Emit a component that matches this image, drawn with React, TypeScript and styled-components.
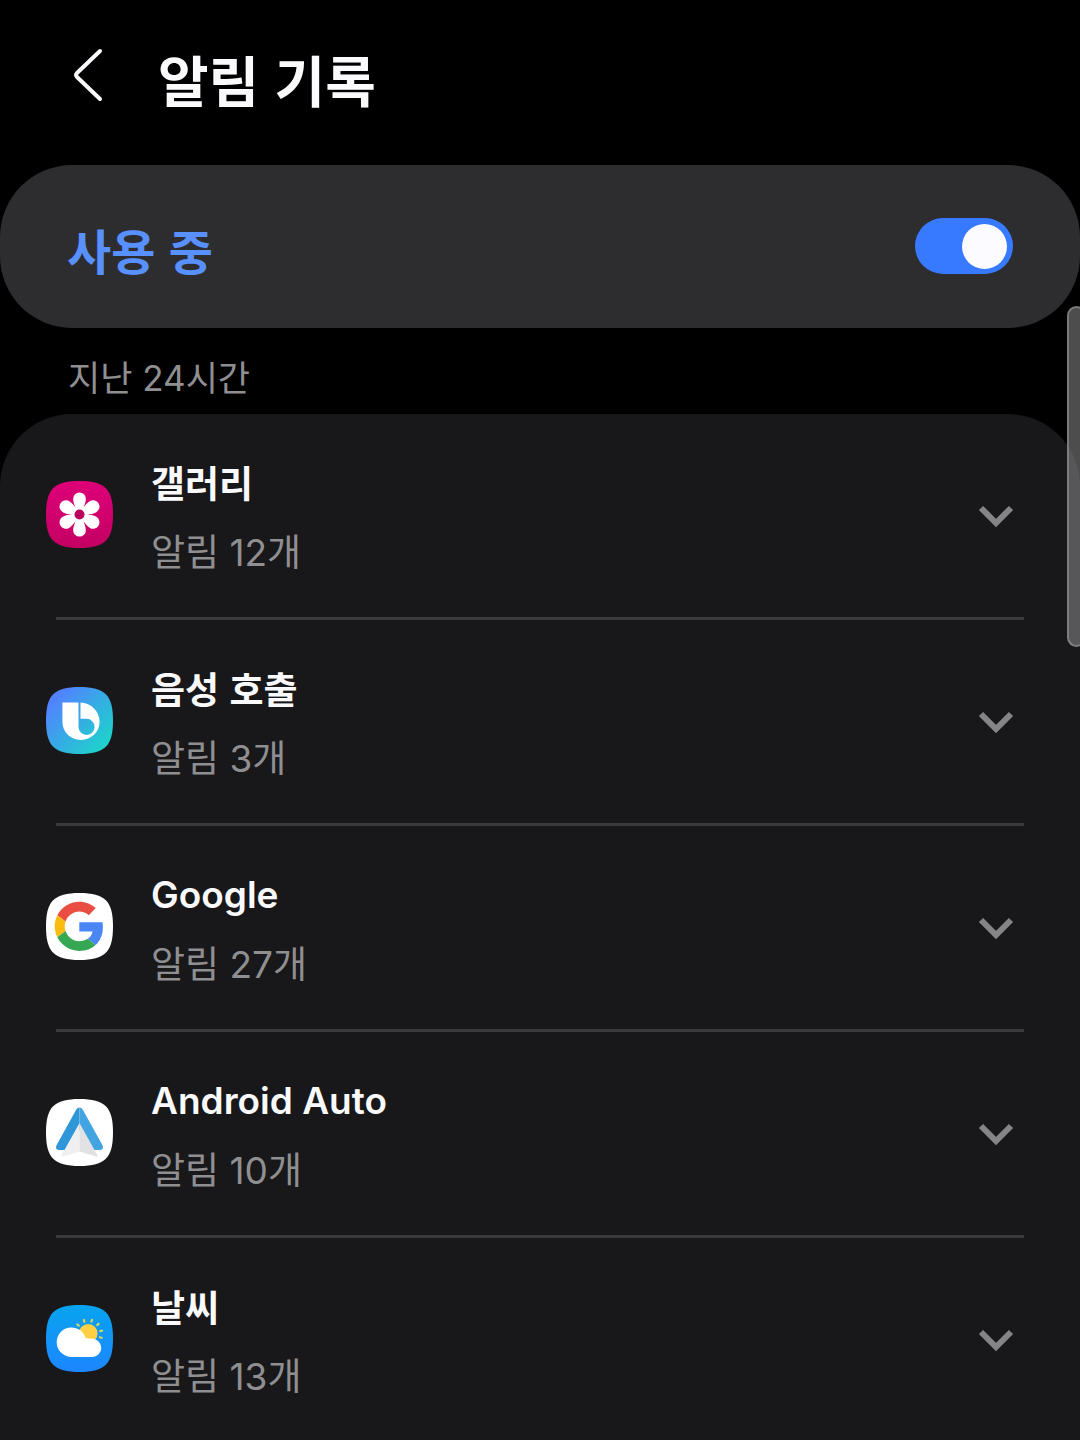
import React, { useState } from "react";
import styled, { createGlobalStyle } from "styled-components";

const hangulFirst = `"Noto Sans CJK KR", "Noto Sans", sans-serif`;
const latinFirst = `Inter, "Noto Sans CJK KR", sans-serif`;

const GlobalStyle = createGlobalStyle`
  *, *::before, *::after { box-sizing: border-box; }
  body {
    margin: 0;
    background: #000;
    color: #fafafc;
    font-family: ${hangulFirst};
  }
  button { font: inherit; color: inherit; background: none; border: 0; padding: 0; cursor: pointer; }
`;

const Screen = styled.div`
  min-height: 100vh;
  display: flex;
  flex-direction: column;
  overflow: hidden;
`;

const Header = styled.header`
  display: flex;
  align-items: flex-start;
  gap: 36px;
  padding: 32px 56px 41px;
`;

const BackButton = styled.button`
  display: flex;
  width: 66px;
  height: 88px;
  align-items: center;
  justify-content: center;
`;

const PageTitle = styled.h1`
  margin: 0;
  font-size: 55px;
  line-height: 92px;
  font-weight: 700;
`;

const SwitchCard = styled.label`
  display: flex;
  align-items: center;
  justify-content: space-between;
  padding: 44px 67px 45px;
  border-radius: 72px;
  background: #2d2d2f;
  cursor: pointer;
`;

const SwitchLabel = styled.span`
  padding-top: 6px;
  color: #5890ff;
  font-size: 48px;
  line-height: 68px;
  font-weight: 700;
`;

const Switch = styled.input`
  appearance: none;
  display: flex;
  align-items: center;
  justify-content: flex-start;
  width: 98px;
  height: 56px;
  margin: 0;
  padding: 0 6px;
  border-radius: 28px;
  background: #5a5a5e;
  cursor: pointer;

  &::before {
    content: "";
    width: 45px;
    height: 45px;
    border-radius: 50%;
    background: #fcfbff;
  }
  &:checked {
    justify-content: flex-end;
    background: #387aff;
  }
`;

const SectionTitle = styled.h2`
  margin: 0;
  padding: 24px 68px 10px;
  color: #8f8f92;
  font-family: ${latinFirst};
  font-size: 35px;
  line-height: 52px;
  font-weight: 400;
`;

const AppList = styled.ul`
  flex: 1;
  margin: 0;
  padding: 0;
  list-style: none;
  border-radius: 72px 72px 0 0;
  background: #18181a;
`;

const AppItem = styled.li`
  & + &::before {
    content: "";
    display: block;
    height: 3px;
    margin: 0 56px;
    background: #3a3a3c;
  }
`;

const AppRow = styled.button`
  display: flex;
  align-items: center;
  width: 100%;
  height: 203px;
  padding: 0 66px 2px 46px;
  gap: 38px;
  text-align: left;
`;

const AppText = styled.span`
  flex: 1;
  display: flex;
  flex-direction: column;
  gap: 15px;
  padding-top: 5px;
`;

const AppName = styled.span`
  font-size: 37px;
  line-height: 55px;
  font-weight: 700;

  &:lang(en) {
    font-family: ${latinFirst};
    font-weight: 600;
  }
`;

const AppCount = styled.span`
  color: #8f8f91;
  font-family: ${latinFirst};
  font-size: 37px;
  line-height: 55px;
  font-weight: 400;
`;

const ScrollThumb = styled.div`
  position: fixed;
  top: 306px;
  right: -6px;
  width: 19px;
  height: 341px;
  border: 2px solid rgba(160, 160, 162, 0.55);
  border-radius: 12px;
  background: rgba(140, 140, 142, 0.55);
  pointer-events: none;
`;

const SQUIRCLE =
  "M100 0C176 0 200 24 200 100S176 200 100 200S0 176 0 100S24 0 100 0Z";

function Tile({ fill, children }: { fill: string; children: React.ReactNode }) {
  return (
    <svg width="67" height="67" viewBox="0 0 200 200" aria-hidden="true">
      <path d={SQUIRCLE} fill={fill} />
      {children}
    </svg>
  );
}

function GalleryIcon() {
  return (
    <Tile fill="url(#gallery)">
      <defs>
        <linearGradient id="gallery" x1="0" y1="0" x2="0" y2="1">
          <stop offset="0" stopColor="#dd0078" />
          <stop offset="1" stopColor="#c40062" />
        </linearGradient>
      </defs>
      {[0, 60, 120, 180, 240, 300].map((a) => (
        <path
          key={a}
          transform={`rotate(${a} 100 100)`}
          d="M88 80C85 71 81 63 81 53A19 19 0 0 1 119 53C119 63 115 71 112 80L100 100Z"
          fill="#fff"
        />
      ))}
      <circle cx="100" cy="100" r="24" fill="#fff" />
      <circle cx="100" cy="100" r="15" fill="#b8005c" />
    </Tile>
  );
}

function BixbyIcon() {
  return (
    <Tile fill="url(#bixby)">
      <defs>
        <linearGradient id="bixby" x1="0.1" y1="0.2" x2="0.85" y2="0.9">
          <stop offset="0" stopColor="#5282ff" />
          <stop offset="0.5" stopColor="#35ace4" />
          <stop offset="1" stopColor="#1fd2cc" />
        </linearGradient>
      </defs>
      <path
        d="M103 46C135 48 160 72 160 104C160 135 135 158 104 158C73 158 49 135 49 104V46H97V120A24 24 0 1 0 121 95H103Z"
        fill="#fff"
      />
    </Tile>
  );
}

function GoogleIcon() {
  return (
    <Tile fill="#fff">
      <g transform="translate(26 26) scale(3.06)">
        <path fill="#ea4d41" d="M24 9.5c3.54 0 6.71 1.22 9.21 3.6l6.85-6.85C35.9 2.38 30.47 0 24 0 14.62 0 6.51 5.38 2.56 13.22l7.98 6.19C12.43 13.72 17.74 9.5 24 9.5z" />
        <path fill="#4a86f5" d="M46.98 24.55c0-1.57-.15-3.09-.38-4.55H24v9.02h12.94c-.58 2.96-2.26 5.48-4.78 7.18l7.73 6c4.51-4.18 7.09-10.36 7.09-17.65z" />
        <path fill="#fbbc12" d="M10.53 28.59c-.48-1.45-.76-2.99-.76-4.59s.27-3.14.76-4.59l-7.98-6.19C.92 16.46 0 20.12 0 24c0 3.88.92 7.54 2.56 10.78l7.97-6.19z" />
        <path fill="#36a853" d="M24 48c6.48 0 11.93-2.13 15.89-5.81l-7.73-6c-2.15 1.45-4.92 2.3-8.16 2.3-6.26 0-11.57-4.22-13.47-9.91l-7.98 6.19C6.51 42.62 14.62 48 24 48z" />
      </g>
    </Tile>
  );
}

function AndroidAutoIcon() {
  return (
    <Tile fill="#fff">
      <path d="M100 25Q94 25 90 32L31 139Q27 152 38 152H68L100 90Z" fill="#2f97d8" />
      <path d="M100 25Q106 25 110 32L169 139Q173 152 162 152H132L100 90Z" fill="#42a4e0" />
      <path d="M100 72L46 169Q45 174 50 172L100 157Z" fill="#efeff0" />
      <path d="M100 72L154 169Q155 174 150 172L100 157Z" fill="#e2e2e4" />
    </Tile>
  );
}

function WeatherIcon() {
  return (
    <Tile fill="url(#weather)">
      <defs>
        <linearGradient id="weather" x1="0" y1="0" x2="0" y2="1">
          <stop offset="0" stopColor="#08a4ee" />
          <stop offset="1" stopColor="#1c86ff" />
        </linearGradient>
      </defs>
      {[-50, -18, 15, 47, 79, 108].map((a) => (
        <path
          key={a}
          transform={`rotate(${a} 126 85)`}
          d="M126 51V40"
          stroke="#d8dc5c"
          strokeWidth="6"
        />
      ))}
      <circle cx="126" cy="85" r="28" fill="#ffd043" />
      <path d="M77 155A44 44 0 1 1 118 98Q126 101 138 101A27 27 0 0 1 138 155Z" fill="#fff" />
    </Tile>
  );
}

function BackIcon() {
  return (
    <svg width="34" height="56" viewBox="0 0 34 56" fill="none" aria-hidden="true">
      <path d="M28 3L5 25Q3 27 5 29L28 51" stroke="#fafafc" strokeWidth="4" strokeLinecap="round" strokeLinejoin="round" />
    </svg>
  );
}

function ChevronDown() {
  return (
    <svg width="36" height="26" viewBox="0 0 36 26" fill="none" aria-hidden="true">
      <path d="M3 6L18 21L33 6" stroke="#858588" strokeWidth="6" />
    </svg>
  );
}

const apps = [
  { name: "갤러리", lang: "ko", count: 12, Icon: GalleryIcon },
  { name: "음성 호출", lang: "ko", count: 3, Icon: BixbyIcon },
  { name: "Google", lang: "en", count: 27, Icon: GoogleIcon },
  { name: "Android Auto", lang: "en", count: 10, Icon: AndroidAutoIcon },
  { name: "날씨", lang: "ko", count: 13, Icon: WeatherIcon },
];

export default function App() {
  const [enabled, setEnabled] = useState(true);

  return (
    <>
      <GlobalStyle />
      <Screen lang="ko">
        <Header>
          <BackButton type="button" aria-label="뒤로">
            <BackIcon />
          </BackButton>
          <PageTitle>알림 기록</PageTitle>
        </Header>
        <SwitchCard htmlFor="history-switch">
          <SwitchLabel>사용 중</SwitchLabel>
          <Switch
            id="history-switch"
            type="checkbox"
            role="switch"
            checked={enabled}
            onChange={(e) => setEnabled(e.target.checked)}
          />
        </SwitchCard>
        <SectionTitle>지난 24시간</SectionTitle>
        <AppList>
          {apps.map(({ name, lang, count, Icon }) => (
            <AppItem key={name}>
              <AppRow type="button" aria-expanded={false}>
                <Icon />
                <AppText>
                  <AppName lang={lang}>{name}</AppName>
                  <AppCount>{`알림 ${count}개`}</AppCount>
                </AppText>
                <ChevronDown />
              </AppRow>
            </AppItem>
          ))}
        </AppList>
        <ScrollThumb />
      </Screen>
    </>
  );
}
